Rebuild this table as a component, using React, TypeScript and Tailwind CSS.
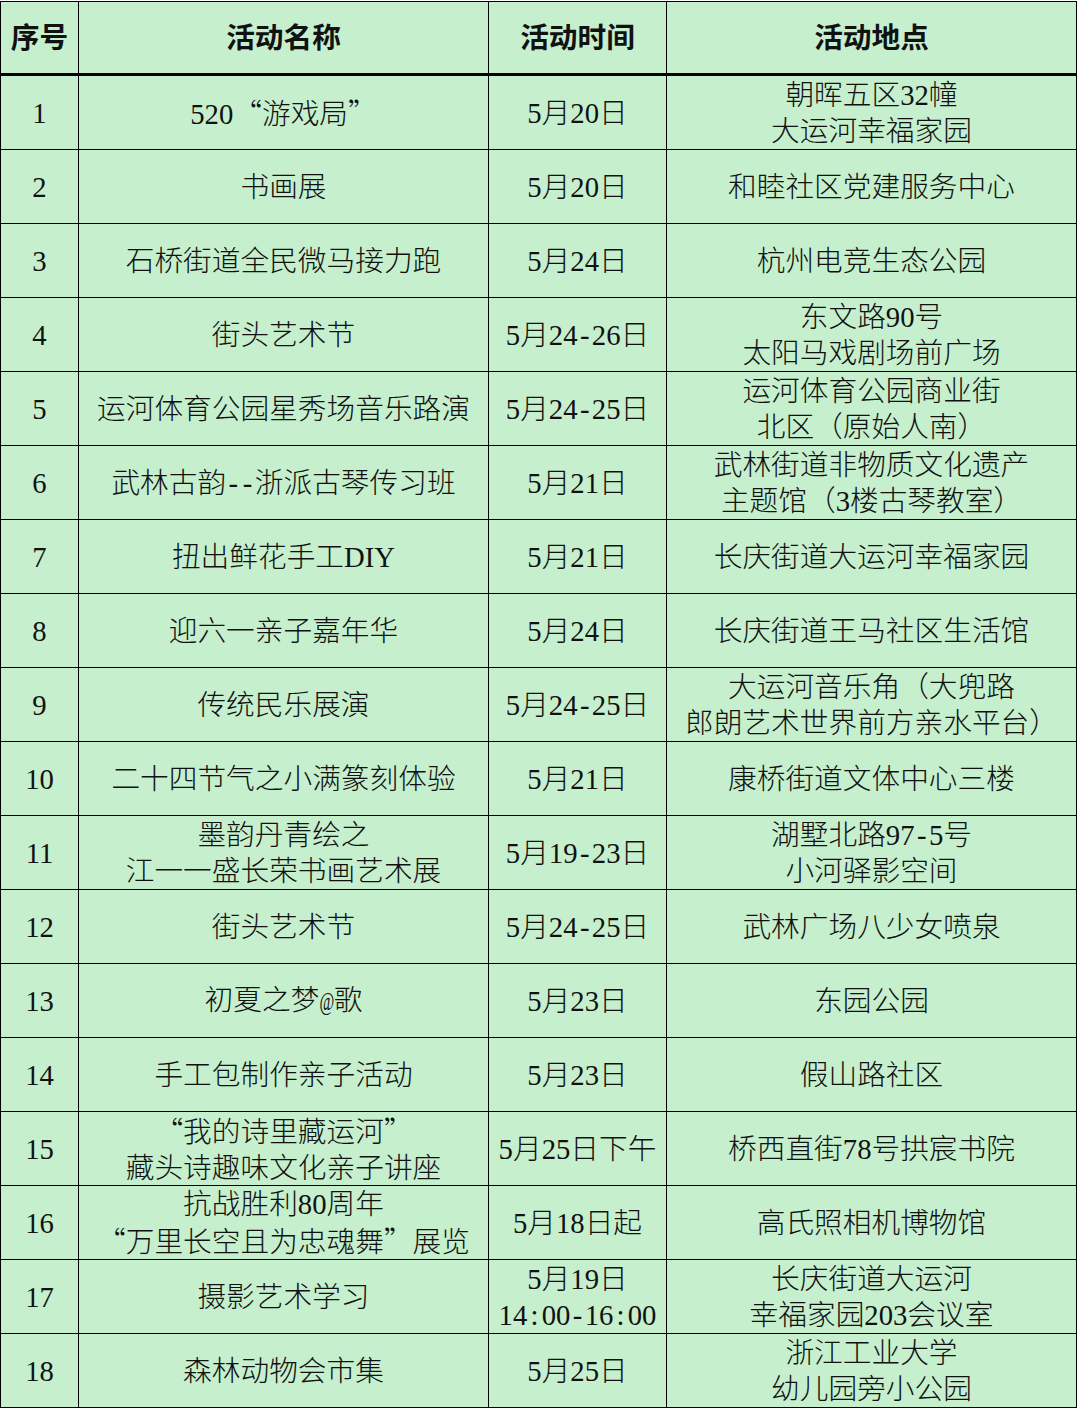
import React from "react";

type Row = [string, string[], string[], string[]];

const rows: Row[] = [
  ["1", ["520“游戏局”"], ["5月20日"], ["朝晖五区32幢", "大运河幸福家园"]],
  ["2", ["书画展"], ["5月20日"], ["和睦社区党建服务中心"]],
  ["3", ["石桥街道全民微马接力跑"], ["5月24日"], ["杭州电竞生态公园"]],
  ["4", ["街头艺术节"], ["5月24-26日"], ["东文路90号", "太阳马戏剧场前广场"]],
  ["5", ["运河体育公园星秀场音乐路演"], ["5月24-25日"], ["运河体育公园商业街", "北区（原始人南）"]],
  ["6", ["武林古韵--浙派古琴传习班"], ["5月21日"], ["武林街道非物质文化遗产", "主题馆（3楼古琴教室）"]],
  ["7", ["扭出鲜花手工DIY"], ["5月21日"], ["长庆街道大运河幸福家园"]],
  ["8", ["迎六一亲子嘉年华"], ["5月24日"], ["长庆街道王马社区生活馆"]],
  ["9", ["传统民乐展演"], ["5月24-25日"], ["大运河音乐角（大兜路", "郎朗艺术世界前方亲水平台）"]],
  ["10", ["二十四节气之小满篆刻体验"], ["5月21日"], ["康桥街道文体中心三楼"]],
  ["11", ["墨韵丹青绘之", "江一一盛长荣书画艺术展"], ["5月19-23日"], ["湖墅北路97-5号", "小河驿影空间"]],
  ["12", ["街头艺术节"], ["5月24-25日"], ["武林广场八少女喷泉"]],
  ["13", ["初夏之梦@歌"], ["5月23日"], ["东园公园"]],
  ["14", ["手工包制作亲子活动"], ["5月23日"], ["假山路社区"]],
  ["15", ["“我的诗里藏运河”", "藏头诗趣味文化亲子讲座"], ["5月25日下午"], ["桥西直街78号拱宸书院"]],
  ["16", ["抗战胜利80周年", "“万里长空且为忠魂舞”展览"], ["5月18日起"], ["高氏照相机博物馆"]],
  ["17", ["摄影艺术学习"], ["5月19日", "14:00-16:00"], ["长庆街道大运河", "幸福家园203会议室"]],
  ["18", ["森林动物会市集"], ["5月25日"], ["浙江工业大学", "幼儿园旁小公园"]],
];

function T({ s }: { s: string }) {
  const parts = s.split(/([“”]+|[:\-@])/);
  return (
    <>
      {parts.map((p, i) => {
        if (/^[“”]+$/.test(p))
          return (
            <span key={i} className="font-['Noto_Sans_CJK_SC']">
              {p}
            </span>
          );
        if (p === "@")
          return (
            <span key={i} className="inline-flex w-[0.5em] justify-center">
              <span className="inline-block scale-x-[0.62] text-[0.9em]">@</span>
            </span>
          );
        if (/^[:\-]$/.test(p))
          return (
            <span key={i} className="inline-block w-[0.5em] text-center">
              {p}
            </span>
          );
        return <React.Fragment key={i}>{p}</React.Fragment>;
      })}
    </>
  );
}

function Cell({ lines, w }: { lines: string[]; w: string }) {
  return (
    <div className={`${w} border-r border-black flex flex-col items-center justify-center shrink-0 overflow-visible`}>
      {lines.map((l, i) => (
        <div key={i} className="whitespace-nowrap leading-[36px]">
          <T s={l} />
        </div>
      ))}
    </div>
  );
}

export default function App() {
  return (
    <div className="w-[1077px] h-[1408px] bg-white pt-px">
      <div className="w-[1077px] border-l border-t border-black bg-[#c6efce] text-[#111] text-[28.7px] font-['Liberation_Serif','Noto_Sans_CJK_SC',serif]">
        <div className="flex h-[74px] border-b-[3px] border-black font-bold">
          <Cell lines={["序号"]} w="w-[78px]" />
          <Cell lines={["活动名称"]} w="w-[410px]" />
          <Cell lines={["活动时间"]} w="w-[178px]" />
          <Cell lines={["活动地点"]} w="w-[410px]" />
        </div>
        {rows.map((r) => (
          <div key={r[0]} className="flex h-[74px] border-b border-black font-light">
            <Cell lines={[r[0]]} w="w-[78px]" />
            <Cell lines={r[1]} w="w-[410px]" />
            <Cell lines={r[2]} w="w-[178px]" />
            <Cell lines={r[3]} w="w-[410px]" />
          </div>
        ))}
      </div>
    </div>
  );
}
